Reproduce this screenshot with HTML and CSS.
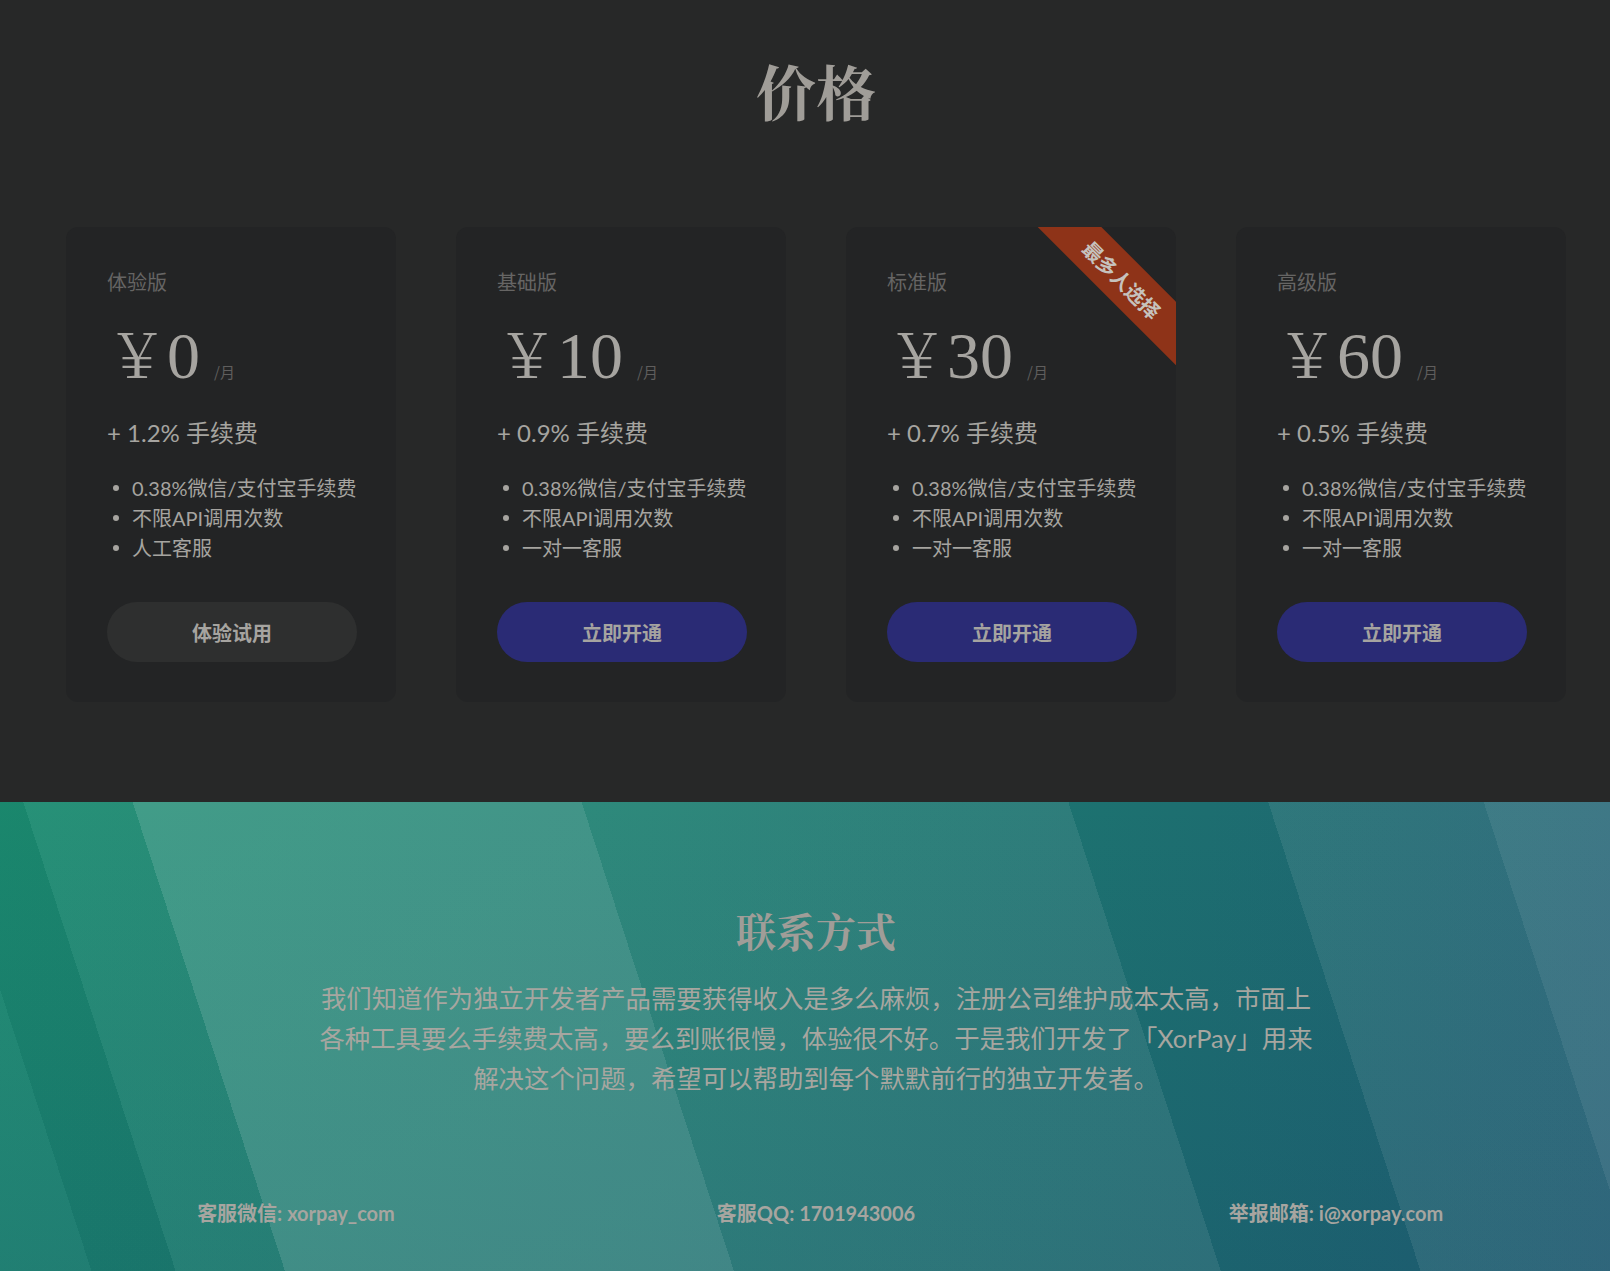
FILE: index.html
```html
<!DOCTYPE html>
<html lang="zh-CN">
<head>
<meta charset="utf-8">
<title>价格</title>
<link rel="stylesheet" href="styles.css">
</head>
<body>
<section class="pricing">
  <div class="wrap">
    <h2 class="section-title">价格</h2>
    <div class="plans">
      <div class="plan">
        <div class="plan-name">体验版</div>
        <div class="plan-price"><span class="yen">￥</span><span class="amount">0</span><span class="unit">/月</span></div>
        <div class="plan-fee">+ 1.2% 手续费</div>
        <ul class="plan-features">
          <li>0.38%微信/支付宝手续费</li>
          <li>不限API调用次数</li>
          <li>人工客服</li>
        </ul>
        <a class="btn btn-gray">体验试用</a>
      </div>
      <div class="plan">
        <div class="plan-name">基础版</div>
        <div class="plan-price"><span class="yen">￥</span><span class="amount">10</span><span class="unit">/月</span></div>
        <div class="plan-fee">+ 0.9% 手续费</div>
        <ul class="plan-features">
          <li>0.38%微信/支付宝手续费</li>
          <li>不限API调用次数</li>
          <li>一对一客服</li>
        </ul>
        <a class="btn btn-blue">立即开通</a>
      </div>
      <div class="plan">
        <div class="ribbon">最多人选择</div>
        <div class="plan-name">标准版</div>
        <div class="plan-price"><span class="yen">￥</span><span class="amount">30</span><span class="unit">/月</span></div>
        <div class="plan-fee">+ 0.7% 手续费</div>
        <ul class="plan-features">
          <li>0.38%微信/支付宝手续费</li>
          <li>不限API调用次数</li>
          <li>一对一客服</li>
        </ul>
        <a class="btn btn-blue">立即开通</a>
      </div>
      <div class="plan">
        <div class="plan-name">高级版</div>
        <div class="plan-price"><span class="yen">￥</span><span class="amount">60</span><span class="unit">/月</span></div>
        <div class="plan-fee">+ 0.5% 手续费</div>
        <ul class="plan-features">
          <li>0.38%微信/支付宝手续费</li>
          <li>不限API调用次数</li>
          <li>一对一客服</li>
        </ul>
        <a class="btn btn-blue">立即开通</a>
      </div>
    </div>
  </div>
</section>
<section class="contact">
  <div class="wrap">
    <h2 class="contact-title">联系方式</h2>
    <p class="contact-text">我们知道作为独立开发者产品需要获得收入是多么麻烦，注册公司维护成本太高，市面上各种工具要么手续费太高，要么到账很慢，体验很不好。于是我们开发了「XorPay」用来解决这个问题，希望可以帮助到每个默默前行的独立开发者。</p>
    <div class="contact-items">
      <div class="contact-item">客服微信: xorpay_com</div>
      <div class="contact-item">客服QQ: 1701943006</div>
      <div class="contact-item">举报邮箱: i@xorpay.com</div>
    </div>
  </div>
</section>
</body>
</html>
```
FILE: styles.css
```css
html, body {
  margin: 0;
  padding: 0;
}
body {
  background: #272828;
  color: #a6a4a0;
  font-family: Lato, "Noto Sans CJK SC", sans-serif;
}
.wrap {
  width: 1560px;
  margin-left: 36px;
}
.pricing {
  padding: 50px 0 100px;
}
.section-title {
  margin: 0;
  text-align: center;
  font-family: "Noto Serif CJK SC", "Noto Sans CJK SC", serif;
  font-size: 60px;
  line-height: 80px;
  font-weight: 700;
  color: #a09d98;
}
.plans {
  margin-top: 97px;
  display: grid;
  grid-template-columns: repeat(4, 1fr);
}
.plan {
  position: relative;
  overflow: hidden;
  margin: 0 30px;
  padding: 40px 41px 40px 41px;
  background: #232425;
  border-radius: 12px;
}
.plan-name {
  font-size: 20px;
  line-height: 30px;
  color: #666564;
  font-family: "Noto Sans CJK SC", sans-serif;
}
.plan-price {
  margin-top: 15px;
  height: 80px;
  line-height: 80px;
  font-family: "Liberation Serif", "Noto Serif CJK SC", serif;
  color: #a6a4a0;
  white-space: nowrap;
}
.yen {
  font-family: "Noto Serif CJK SC", "Liberation Serif", serif;
  font-size: 60px;
}
.amount {
  font-size: 66px;
}
.unit {
  font-family: "Noto Sans CJK SC", sans-serif;
  font-size: 15px;
  color: #5f5e5d;
  margin-left: 14px;
}
.plan-fee {
  margin-top: 23px;
  font-size: 24px;
  line-height: 36px;
  color: #a6a4a0;
}
.plan-features {
  margin: 22px 0 0;
  padding: 0;
  list-style: none;
  font-size: 20px;
  line-height: 30px;
  color: #a6a4a0;
  white-space: nowrap;
}
.plan-features li {
  display: flex;
  align-items: center;
}
.plan-features li::before {
  content: "";
  width: 6px;
  height: 6px;
  border-radius: 50%;
  background: #a6a4a0;
  margin: 0 13px 0 6px;
  flex: none;
}
.btn {
  display: flex;
  align-items: center;
  justify-content: center;
  margin-top: 39px;
  width: 250px;
  height: 60px;
  border-radius: 30px;
  font-family: "Noto Sans CJK SC", sans-serif;
  font-weight: 700;
  font-size: 20px;
  color: #a6a4a0;
}
.btn-gray {
  background: #2e2f2f;
}
.btn-blue {
  background: #2a2b75;
}
.ribbon {
  position: absolute;
  left: 166px;
  top: 30px;
  width: 220px;
  height: 45px;
  line-height: 45px;
  text-align: center;
  background: #8e3318;
  color: #c6c2bd;
  font-family: "Noto Sans CJK SC", sans-serif;
  font-weight: 700;
  font-size: 20px;
  transform: rotate(45deg);
}
.contact {
  height: 469px;
  box-sizing: border-box;
  padding-top: 100px;
  background:
    linear-gradient(72deg,
      rgba(255,255,255,0.03) 0 87px,
      rgba(0,0,0,0.03) 87px 167px,
      rgba(255,255,255,0.05) 167px 271px,
      rgba(255,255,255,0.17) 271px 698px,
      rgba(255,255,255,0.08) 698px 1161px,
      rgba(255,255,255,0) 1161px 1351px,
      rgba(255,255,255,0.08) 1351px 1556px,
      rgba(255,255,255,0.14) 1556px),
    linear-gradient(to bottom, rgba(20,40,100,0) 0%, rgba(20,40,100,0.16) 100%),
    linear-gradient(to right, #1b8b70 0%, #1c7e70 40%, #1d6e70 75%, #1f6272 100%);
}
.contact-title {
  margin: 0;
  text-align: center;
  font-family: "Noto Serif CJK SC", "Noto Sans CJK SC", serif;
  font-size: 40px;
  line-height: 56px;
  font-weight: 700;
  color: #a09d98;
}
.contact-text {
  width: 1000px;
  margin: 20px auto 0;
  text-align: center;
  font-size: 25.4px;
  line-height: 40px;
  color: #a7a6a0;
}
.contact-items {
  margin-top: 100px;
  display: grid;
  grid-template-columns: repeat(3, 1fr);
  text-align: center;
  font-size: 20px;
  line-height: 30px;
  font-weight: 700;
  color: #a7a5a0;
}
```
